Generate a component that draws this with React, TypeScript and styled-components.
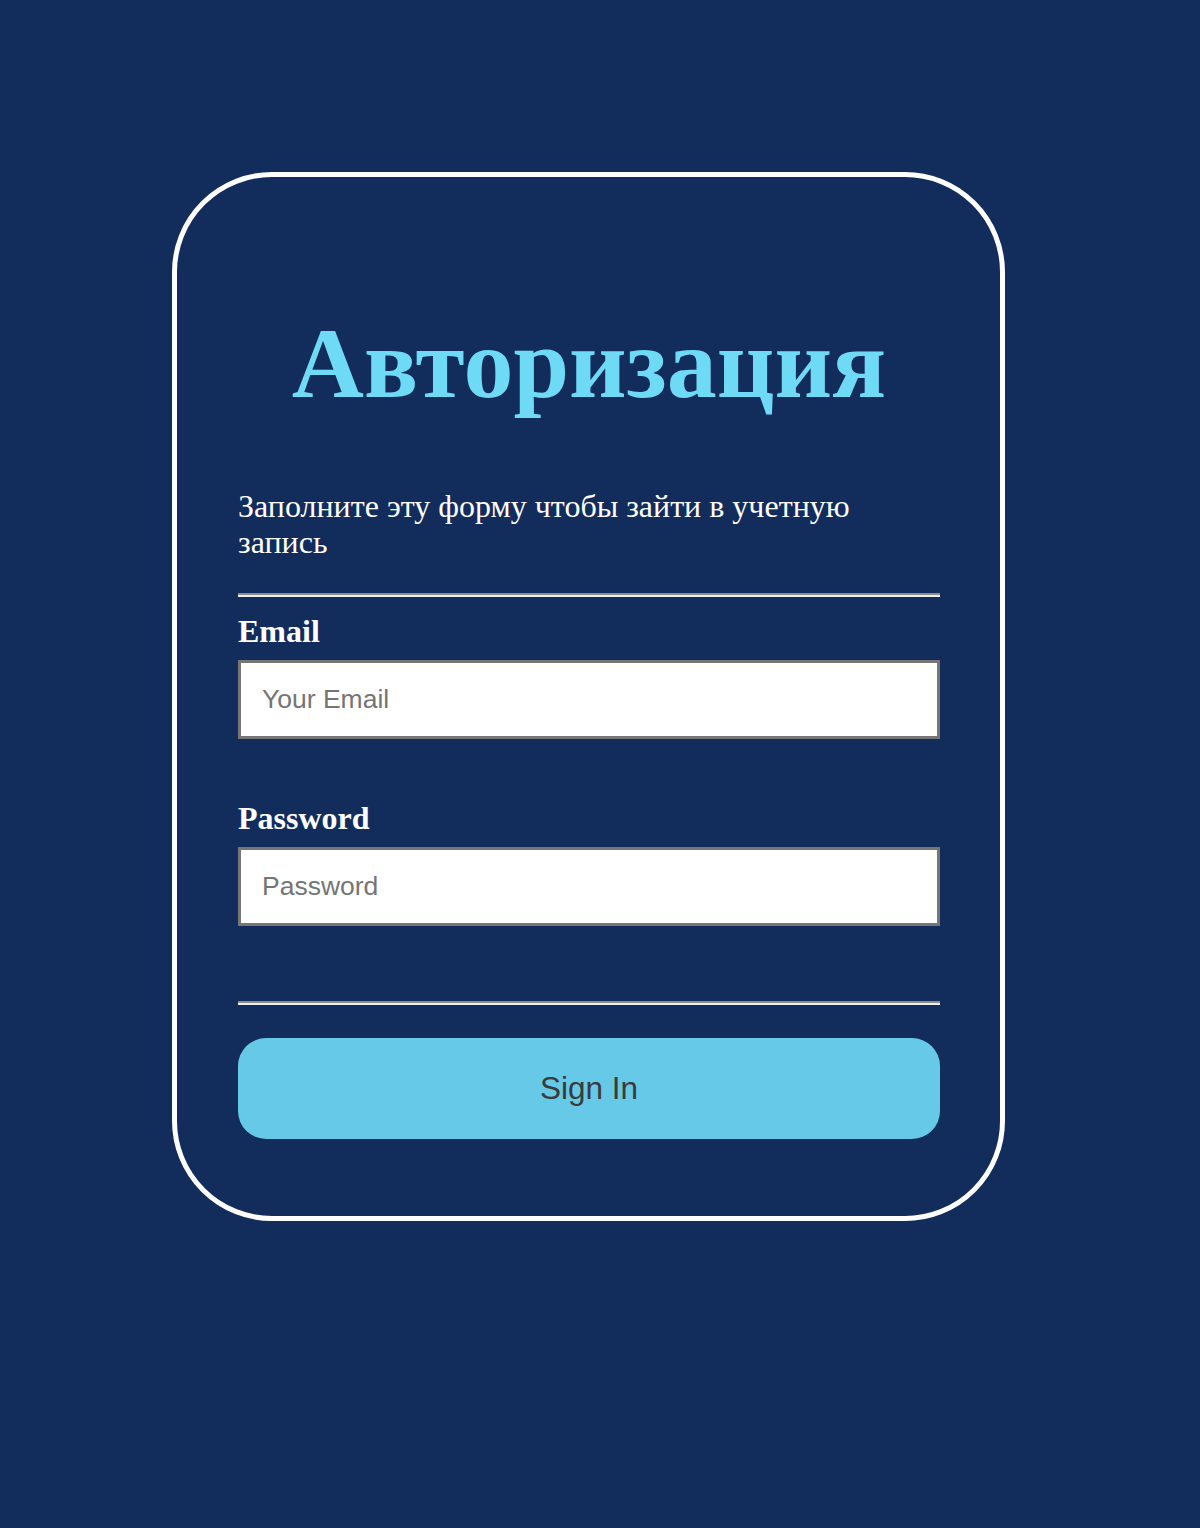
import React from "react";
import styled, { createGlobalStyle } from "styled-components";

const GlobalStyle = createGlobalStyle`
  html, body {
    margin: 0;
    padding: 0;
    background: #122c5c;
  }
  body {
    font-family: "Liberation Serif", "Times New Roman", serif;
    min-height: 1528px;
  }
  * { box-sizing: border-box; }
`;

const Page = styled.main`
  display: flex;
  align-items: flex-start;
  padding: 172px 0 300px 172px;
`;

const Card = styled.form`
  width: 833px;
  border: 5px solid #ffffff;
  border-radius: 100px;
  padding: 0 60px 77px 61px;
  display: flex;
  flex-direction: column;
`;

const Title = styled.h1`
  margin: 137px 0 0;
  font-family: "Liberation Serif", "Times New Roman", serif;
  font-size: 100px;
  line-height: 100px;
  font-weight: 700;
  color: #6fdaf6;
  text-align: center;
`;

const Intro = styled.p`
  margin: 74px 0 0;
  font-size: 32px;
  line-height: 36px;
  color: #ffffff;
  padding-right: 60px;
`;

const Divider = styled.hr<{ $gap: number }>`
  width: 100%;
  height: 0;
  margin: ${(p) => p.$gap}px 0 0;
  border: none;
  border-top: 2px solid #8c8c8c;
  border-bottom: 2px solid #eeeeee;
`;

const Label = styled.label<{ $gap: number }>`
  display: block;
  margin-top: ${(p) => p.$gap}px;
  font-size: 32px;
  line-height: 36px;
  font-weight: 700;
  color: #ffffff;
`;

const Input = styled.input`
  display: block;
  width: 100%;
  height: 79px;
  margin-top: 11px;
  padding: 0 20px 0 21px;
  border: 3px solid #767676;
  border-radius: 0;
  background: #ffffff;
  font-family: "Liberation Sans", Arial, sans-serif;
  font-size: 26.5px;
  color: #333;
  outline: none;
  &::placeholder {
    color: #757575;
  }
`;

const SubmitButton = styled.button`
  margin-top: 33px;
  width: 100%;
  height: 101px;
  border: none;
  border-radius: 28px;
  background: #67c9e8;
  color: #3a3a3a;
  font-family: "Liberation Sans", Arial, sans-serif;
  font-size: 31.5px;
  cursor: pointer;
`;

export default function App() {
  return (
    <>
      <GlobalStyle />
      <Page>
        <Card onSubmit={(e) => e.preventDefault()}>
          <Title>Авторизация</Title>
          <Intro>Заполните эту форму чтобы зайти в учетную запись</Intro>
          <Divider $gap={33} />
          <Label $gap={16} htmlFor="email">Email</Label>
          <Input id="email" type="email" placeholder="Your Email" />
          <Label $gap={61} htmlFor="password">Password</Label>
          <Input id="password" type="password" placeholder="Password" />
          <Divider $gap={75} />
          <SubmitButton type="submit">Sign In</SubmitButton>
        </Card>
      </Page>
    </>
  );
}
